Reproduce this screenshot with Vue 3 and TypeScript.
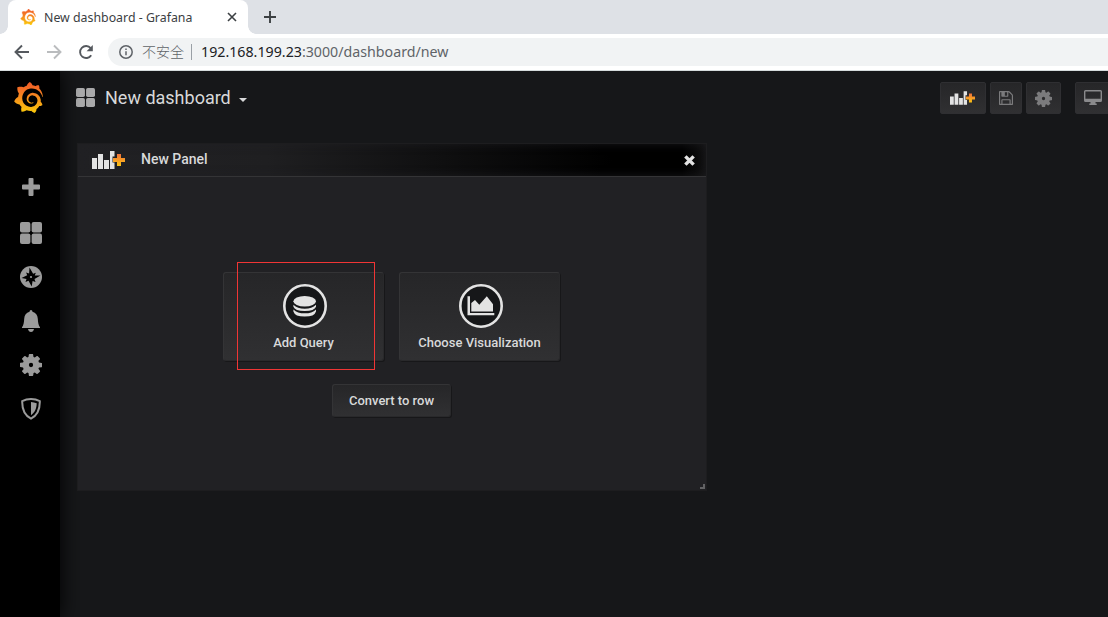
<script setup lang="ts">
interface PanelAction {
  label: string
  icon: 'database' | 'chart'
}

const actions: PanelAction[] = [
  { label: 'Add Query', icon: 'database' },
  { label: 'Choose Visualization', icon: 'chart' },
]

const grafanaPath =
  'M23.02 10.59a8.578 8.578 0 0 0-.862-3.034 8.911 8.911 0 0 0-1.789-2.445c.337-1.342-.413-2.505-.413-2.505-1.292-.08-2.113.4-2.416.62-.052-.02-.102-.044-.154-.064-.22-.089-.446-.172-.677-.247-.231-.073-.47-.14-.711-.197a9.867 9.867 0 0 0-.875-.161C14.557.753 12.94 0 12.94 0c-1.804 1.145-2.147 2.744-2.147 2.744l-.018.093c-.098.029-.2.057-.298.088-.138.042-.275.094-.413.143-.138.055-.275.107-.41.166a8.869 8.869 0 0 0-1.557.87l-.063-.029c-2.497-.955-4.716.195-4.716.195-.203 2.658.996 4.33 1.235 4.636a11.608 11.608 0 0 0-.607 2.635C1.636 12.677.953 15.014.953 15.014c1.926 2.214 4.171 2.351 4.171 2.351.003-.002.006-.002.006-.005.285.509.615.994.986 1.446.156.19.32.371.488.548-.704 2.009.099 3.68.099 3.68 2.144.08 3.553-.937 3.849-1.173a9.784 9.784 0 0 0 3.164.501h.08l.055-.003.107-.002.103-.005.003.002c1.01 1.44 2.788 1.646 2.788 1.646 1.264-1.332 1.337-2.653 1.337-2.94v-.058c0-.02-.003-.039-.003-.06.265-.187.52-.387.758-.6a7.875 7.875 0 0 0 1.415-1.7c1.43.083 2.437-.885 2.437-.885-.236-1.49-1.085-2.216-1.264-2.354l-.018-.013-.016-.013a.217.217 0 0 1-.031-.02c.008-.092.016-.18.02-.27.011-.162.016-.323.016-.48v-.253l-.005-.098-.008-.135a1.891 1.891 0 0 0-.01-.13c-.003-.042-.008-.083-.013-.125l-.016-.124-.018-.122a6.215 6.215 0 0 0-2.032-3.73 6.015 6.015 0 0 0-3.222-1.46 6.292 6.292 0 0 0-.85-.048l-.107.002h-.063l-.044.003-.104.008a4.777 4.777 0 0 0-3.335 1.695c-.332.4-.592.84-.768 1.297a4.594 4.594 0 0 0-.312 1.817l.003.091c.005.055.007.11.013.164a3.615 3.615 0 0 0 .698 1.82 3.53 3.53 0 0 0 1.827 1.282c.33.098.66.14.971.137.039 0 .078 0 .114-.002l.063-.003c.02 0 .041-.003.062-.003.034-.002.065-.007.099-.01.007 0 .018-.003.028-.003l.031-.005.06-.008a1.18 1.18 0 0 0 .112-.02c.036-.008.072-.013.109-.024a2.634 2.634 0 0 0 .914-.415c.028-.02.056-.041.085-.065a.248.248 0 0 0 .039-.35.244.244 0 0 0-.309-.06l-.078.042c-.09.044-.184.083-.283.116a2.476 2.476 0 0 1-.475.096c-.028.003-.054.006-.083.006l-.083.002c-.026 0-.054 0-.08-.002l-.102-.006h-.012l-.024.006c-.016-.003-.031-.003-.044-.006-.031-.002-.06-.007-.091-.01a2.59 2.59 0 0 1-.724-.213 2.557 2.557 0 0 1-.667-.438 2.52 2.52 0 0 1-.805-1.475 2.306 2.306 0 0 1-.029-.444l.006-.122v-.023l.002-.031c.003-.021.003-.04.005-.06a3.163 3.163 0 0 1 1.352-2.29 3.12 3.12 0 0 1 .937-.43 2.946 2.946 0 0 1 .776-.101h.06l.07.002.045.003h.026l.07.005a4.041 4.041 0 0 1 1.635.49 3.94 3.94 0 0 1 1.602 1.662 3.77 3.77 0 0 1 .397 1.414l.005.076.003.075c.002.026.002.05.002.075 0 .024.003.052 0 .07v.065l-.002.073-.008.174a6.195 6.195 0 0 1-.08.639 5.1 5.1 0 0 1-.267.927 5.31 5.31 0 0 1-.624 1.13 5.052 5.052 0 0 1-3.237 2.014 4.82 4.82 0 0 1-.649.066l-.039.003h-.287a6.607 6.607 0 0 1-1.716-.265 6.776 6.776 0 0 1-3.4-2.274 6.75 6.75 0 0 1-.746-1.15 6.616 6.616 0 0 1-.714-2.596l-.005-.083-.002-.02v-.056l-.003-.073v-.096l-.003-.104v-.07l.003-.163c.008-.22.026-.45.054-.678a8.707 8.707 0 0 1 .28-1.355c.128-.444.286-.872.473-1.277a7.04 7.04 0 0 1 1.456-2.1 5.925 5.925 0 0 1 .953-.763c.169-.111.343-.213.524-.306.089-.05.182-.091.273-.135.047-.02.093-.042.138-.062a7.177 7.177 0 0 1 .714-.267l.145-.045c.049-.015.098-.026.148-.041.098-.029.197-.052.296-.076.049-.013.1-.02.15-.033l.15-.032.151-.028.076-.013.075-.01.153-.024c.057-.01.114-.013.171-.023l.169-.021c.036-.003.073-.008.106-.01l.073-.008.036-.003.042-.002c.057-.003.114-.008.171-.01l.086-.006h.023l.037-.003.145-.007a7.999 7.999 0 0 1 1.708.125 7.917 7.917 0 0 1 2.048.68 8.253 8.253 0 0 1 1.672 1.09l.09.077.089.078c.06.052.114.107.171.159.057.052.112.106.166.16.052.055.107.107.159.164a8.671 8.671 0 0 1 1.41 1.978c.012.026.028.052.04.078l.04.078.075.156c.023.051.05.1.07.153l.065.15a8.848 8.848 0 0 1 .45 1.34.19.19 0 0 0 .201.142.186.186 0 0 0 .172-.184c.01-.246.002-.532-.024-.856z'

const cogBody =
  'M1536 787v222q0 12-8 23t-20 13l-185 28q-19 54-39 91 35 50 107 138 10 12 10 25t-9 23q-27 37-99 108t-94 71q-12 0-26-9l-138-108q-44 23-91 38-16 136-29 186-7 28-36 28h-222q-14 0-24.5-8.5t-11.5-21.5l-28-184q-49-16-90-37l-141 107q-10 9-25 9-14 0-25-11-126-114-165-168-7-10-7-23 0-12 8-23 15-21 51-66.5t54-70.5q-27-50-41-99l-183-27q-13-2-21-12.5t-8-23.5v-222q0-12 8-23t19-13l186-28q14-46 39-92-40-57-107-138-10-12-10-24 0-10 9-23 26-36 98.5-107.5t94.500-71.5q13 0 26 10l138 107q44-23 91-38 16-136 29-186 7-28 36-28h222q14 0 24.5 8.500t11.5 21.500l28 184q49 16 90 37l142-107q9-9 24-9 13 0 25 10 129 119 165 170 7 8 7 22 0 12-8 23-15 21-51 66.500t-54 70.500q26 50 41 98l183 28q13 2 21 12.500t8 23.500z'
const cogHole = (r: number): string =>
  `M${768 - r} 896a${r} ${r} 0 1 0 ${2 * r} 0a${r} ${r} 0 1 0 ${-2 * r} 0z`
const cogPath = cogBody + cogHole(150)

const floppyPath =
  'M384 1536h768v-384h-768v384zm896 0h128v-896q0-14-10-38.500t-20-34.500l-281-281q-10-10-34-20t-39-10v416q0 40-28 68t-68 28h-576q-40 0-68-28t-28-68v-416h-128v1280h128v-416q0-40 28-68t68-28h832q40 0 68 28t28 68v416zm-384-928v-320q0-13-9.500-22.500t-22.500-9.500h-192q-13 0-22.500 9.500t-9.500 22.500v320q0 13 9.500 22.500t22.500 9.500h192q13 0 22.500-9.500t9.500-22.500zm640 32v928q0 40-28 68t-68 28h-1344q-40 0-68-28t-28-68v-1344q0-40 28-68t68-28h928q40 0 88 20t76 48l280 280q28 28 48 76t20 88z'
</script>

<template>
  <div class="window">
    <svg class="defs" width="0" height="0">
      <defs>
        <linearGradient id="flame" x1="0" y1="0" x2="0" y2="1">
          <stop offset="0" stop-color="#f05a28" />
          <stop offset="0.35" stop-color="#f47b23" />
          <stop offset="1" stop-color="#fbca0a" />
        </linearGradient>
        <linearGradient id="plusFill" x1="0" y1="0" x2="0" y2="1">
          <stop offset="0" stop-color="#f2713a" />
          <stop offset="1" stop-color="#fbc412" />
        </linearGradient>
        <symbol id="addPanel" viewBox="0 0 33 18">
          <path d="M0 7h5v11H0zM6 3h5v15H6zM12 9h5v9h-5zM18 0h4.500v5.500h-2v6h2V18H18z" fill="#e3e3e3" />
          <path d="M25 3h4v4h4v4h-4v4h-4v-4h-4V7h4z" fill="url(#plusFill)" />
        </symbol>
      </defs>
    </svg>

    <div class="tabs">
      <div class="tab">
        <svg class="favicon" viewBox="0 0 24 24"><path :d="grafanaPath" fill="url(#flame)" stroke="url(#flame)" stroke-width=".5" /></svg>
        <span class="tab-title">New dashboard - Grafana</span>
        <svg class="tab-close" viewBox="0 0 10 10"><path d="M1 1l8 8M9 1l-8 8" /></svg>
      </div>
      <svg class="new-tab" viewBox="0 0 12 12"><path d="M6 0v12M0 6h12" /></svg>
    </div>

    <div class="toolbar">
      <svg class="nav" viewBox="0 0 16 16"><path d="M15 8H2M8 1.500L1.500 8 8 14.500" /></svg>
      <svg class="nav off" viewBox="0 0 16 16"><path d="M1 8h13M8 1.500L14.500 8 8 14.500" /></svg>
      <svg class="nav" viewBox="0 0 16 16">
        <path d="M13.200 11.200A6 6 0 1 1 12.700 4.200" />
        <path class="solid" d="M14.800 1v6.200H8.600z" />
      </svg>
      <div class="omnibox">
        <svg class="info" viewBox="0 0 14 14">
          <circle cx="7" cy="7" r="6.200" />
          <path d="M7 6.200v4M7 3.400v1.600" />
        </svg>
        <span class="insecure">不安全</span>
        <span class="divider"></span>
        <span class="url"><b>192.168.199.23</b>:3000/dashboard/new</span>
      </div>
    </div>

    <div class="app">
      <nav class="sidebar">
        <svg class="logo" viewBox="0 0 24 24"><path :d="grafanaPath" fill="url(#flame)" /></svg>
        <ul class="menu">
          <li>
            <svg width="18" height="18" viewBox="0 0 18 18"><path d="M7.500 0h3q1 0 1 1v5.500H17q1 0 1 1v3q0 1-1 1h-5.500V17q0 1-1 1h-3q-1 0-1-1v-5.500H1q-1 0-1-1v-3q0-1 1-1h5.500V1q0-1 1-1z" /></svg>
          </li>
          <li class="boards">
            <svg width="22" height="22" viewBox="0 0 22 22">
              <rect width="10.400" height="10.400" rx="2" /><rect x="11.600" width="10.400" height="10.400" rx="2" />
              <rect y="11.600" width="10.400" height="10.400" rx="2" /><rect x="11.600" y="11.600" width="10.400" height="10.400" rx="2" />
            </svg>
          </li>
          <li>
            <svg width="22" height="22" viewBox="0 0 22 22">
              <circle cx="11" cy="11" r="11" />
              <path class="cut" d="M9.500 1.500l3.600 6.200 2.700-1-1 2.700 5.700.2-6 3.500 1 2.900-2.900-1-.9 5.500-3.200-5.800-3 1.200 1-3-5-1 5.700-2.700L6.100 6.400l3 1z" />
              <circle cx="11" cy="11" r="1.100" />
            </svg>
          </li>
          <li>
            <svg width="20" height="22" viewBox="0 0 20 22"><path d="M10 0q1.400 0 1.500 1.700c3.300.8 5.100 3.300 5.300 7.100.2 4.200.7 6.500 2.200 8.400v.8H1v-.8c1.500-1.900 2-4.200 2.200-8.400.2-3.800 2-6.300 5.300-7.100Q8.600 0 10 0zM7 19h6q-.6 2.900-3 2.900T7 19z" /></svg>
          </li>
          <li>
            <svg width="22" height="22" viewBox="0 128 1536 1536"><path :d="cogPath" fill-rule="evenodd" /></svg>
          </li>
          <li>
            <svg width="20" height="22" viewBox="0 0 20 22">
              <path class="line" d="M10 1.100c3 0 6 .6 8.800 2 .2 7.800-2.500 14.300-8.800 17.500C3.700 17.400 1 10.900 1.200 3.100 4 1.700 7 1.100 10 1.100z" />
              <path d="M10 4c2 .1 3.800.5 5.700 1.300-.1 4.900-1.700 9.200-5.700 11.900z" />
            </svg>
          </li>
        </ul>
      </nav>

      <main class="main">
        <header class="navbar">
          <svg class="boards-icon" viewBox="0 0 20 20">
            <rect width="9.400" height="9.400" rx="1.800" /><rect x="10.600" width="9.400" height="9.400" rx="1.800" />
            <rect y="10.600" width="9.400" height="9.400" rx="1.800" /><rect x="10.600" y="10.600" width="9.400" height="9.400" rx="1.800" />
          </svg>
          <h1>New dashboard</h1>
          <span class="caret"></span>
          <div class="tools">
            <button class="tool add"><svg width="25" height="14"><use href="#addPanel" /></svg></button>
            <button class="tool save"><svg width="14" height="14" viewBox="0 128 1536 1536"><path :d="floppyPath" /></svg></button>
            <button class="tool cog"><svg width="17" height="17" viewBox="0 128 1536 1536"><path :d="cogPath" fill-rule="evenodd" /></svg></button>
            <button class="tool tv">
              <svg width="18" height="15" viewBox="0 0 18 15"><path fill-rule="evenodd" d="M1.500 0h15Q18 0 18 1.500v9q0 1.500-1.500 1.500h-5v1.500h1.200V15H5.300v-1.500h1.200V12h-5Q0 12 0 10.500v-9Q0 0 1.500 0zM1.400 1.400v7.400h15.200V1.400z" /></svg>
            </button>
          </div>
        </header>

        <section class="panel">
          <div class="panel-head">
            <svg class="panel-icon" width="33" height="18"><use href="#addPanel" /></svg>
            <span class="panel-title">New Panel</span>
            <svg class="panel-close" viewBox="0 0 12 12"><path d="M2.200 2.200l7.600 7.600M9.800 2.200L2.200 9.800" /></svg>
          </div>
          <div class="panel-body">
            <div class="cards">
              <button v-for="action in actions" :key="action.label" class="card">
                <svg class="badge" viewBox="0 0 44 44">
                  <circle class="ring" cx="22" cy="22" r="20.700" />
                  <g v-if="action.icon === 'database'">
                    <ellipse cx="21.700" cy="17.300" rx="11.300" ry="5.200" />
                    <path d="M10.400 20.800q4 3.900 11.300 3.900T33 20.800v2q-1.500 4.200-11.300 4.200t-11.300-4.200z" />
                    <path d="M10.400 25.400q4 3.900 11.300 3.900T33 25.400v2q-1.500 5.200-11.300 5.200t-11.300-5.200z" />
                  </g>
                  <g v-else>
                    <path d="M8.500 12.300H11v16.600h24.300v2.300H8.500z" />
                    <path d="M12.300 27.500v-8.500l3.700-3 4.300 4.800 7.500-8.500 6.200 8v7.200z" />
                  </g>
                </svg>
                <span>{{ action.label }}</span>
              </button>
              <div class="highlight"></div>
            </div>
            <button class="convert">Convert to row</button>
          </div>
          <span class="grip"></span>
        </section>
      </main>
    </div>
  </div>
</template>

<style>
body {
  margin: 0;
  background: #161719;
}
</style>

<style scoped>
.window {
  width: 1108px;
  height: 617px;
  overflow: hidden;
  display: flex;
  flex-direction: column;
  font-family: Roboto, "Liberation Sans", sans-serif;
}
.defs {
  position: absolute;
}
svg {
  display: block;
  flex: none;
}
button {
  font: inherit;
  margin: 0;
  padding: 0;
  box-sizing: border-box;
}
.tabs {
  height: 34px;
  flex: none;
  box-sizing: border-box;
  padding-left: 8px;
  background: #dee1e6;
  display: flex;
  align-items: center;
}
.tab {
  width: 240px;
  height: 34px;
  box-sizing: border-box;
  padding: 0 11px 0 12px;
  border-radius: 8px 8px 0 0;
  background: #fff;
  display: flex;
  align-items: center;
  position: relative;
}
.tab::before,
.tab::after {
  content: "";
  position: absolute;
  bottom: 0;
  width: 8px;
  height: 8px;
}
.tab::before {
  left: -8px;
  background: radial-gradient(circle at 0 0, transparent 7.500px, #fff 8px);
}
.tab::after {
  right: -8px;
  background: radial-gradient(circle at 100% 0, transparent 7.500px, #fff 8px);
}
.favicon {
  width: 16px;
  height: 16px;
}
.tab-title {
  margin-left: 8px;
  padding-top: 2px;
  flex: 1;
  white-space: nowrap;
  font: 12.350px/20px "Noto Sans", sans-serif;
  color: #3c4043;
}
.tab-close {
  width: 10px;
  height: 10px;
  fill: none;
  stroke: #3c4043;
  stroke-width: 1.600;
}
.new-tab {
  margin-left: 16px;
  width: 12px;
  height: 12px;
  fill: none;
  stroke: #3c4043;
  stroke-width: 1.900;
}
.toolbar {
  height: 36px;
  flex: none;
  box-sizing: border-box;
  padding-left: 14px;
  background: #fff;
  border-bottom: 1px solid #fff;
  display: flex;
  align-items: center;
}
.nav {
  width: 16px;
  height: 16px;
  margin-right: 16px;
  fill: none;
  stroke: #55595e;
  stroke-width: 1.900;
}
.nav .solid {
  fill: #55595e;
  stroke: none;
}
.nav.off {
  stroke: #babcbe;
}
.nav + .omnibox {
  margin-left: -2px;
}
.omnibox {
  flex: 1;
  height: 28px;
  padding-left: 11px;
  border-radius: 14px 0 0 14px;
  background: #f1f3f4;
  display: flex;
  align-items: center;
}
.info {
  width: 14px;
  height: 14px;
  fill: none;
  stroke: #5f6368;
  stroke-width: 1.500;
}
.insecure {
  margin-left: 9px;
  padding-bottom: 2px;
  font: 14px/20px "Noto Sans CJK SC", sans-serif;
  font-weight: 300;
  color: #5f6368;
}
.divider {
  width: 1px;
  height: 16px;
  margin: 0 9px 0 7px;
  background: #9aa0a6;
}
.url {
  font: 14.220px/20px "Noto Sans", sans-serif;
  color: #5f6368;
  white-space: nowrap;
}
.url b {
  font-weight: 400;
  color: #202124;
}
.app {
  flex: 1;
  border-top: 1px solid #d5dbdc;
  display: flex;
  background: #161719;
}
.sidebar {
  width: 60px;
  flex: none;
  background: #000;
  box-shadow: 0 0 20px #000;
  clip-path: inset(0 -20px 0 0);
}
.logo {
  width: 31px;
  height: 31px;
  margin: 11px 0 0 12.500px;
}
.menu {
  list-style: none;
  margin: 52px 0 0;
  padding: 0 0 0 2px;
}
.menu li {
  height: 44px;
  display: flex;
  align-items: center;
  justify-content: center;
}
.menu li.boards {
  height: 46px;
  padding-top: 2px;
  box-sizing: border-box;
}
.menu svg {
  fill: #9b9b9b;
}
.menu .cut {
  fill: #000;
}
.menu .line {
  fill: none;
  stroke: #9b9b9b;
  stroke-width: 2;
}
.main {
  flex: 1;
  min-width: 0;
}
.navbar {
  height: 54px;
  padding-left: 16px;
  display: flex;
  align-items: center;
}
.boards-icon {
  width: 19px;
  height: 19px;
  margin-bottom: 1px;
  fill: #a9a9aa;
}
h1 {
  margin: 0 0 0 10px;
  font-size: 18px;
  line-height: 24px;
  font-weight: 400;
  color: #d8d9da;
  white-space: nowrap;
}
.caret {
  margin: 4px 0 0 8px;
  border: 4px solid transparent;
  border-top-color: #d8d9da;
  border-bottom: 0;
}
.tools {
  margin-left: auto;
  display: flex;
}
.tool {
  height: 32px;
  border: 1px solid #2f2f32;
  border-radius: 2px;
  background: linear-gradient(#262628, #303032);
  display: flex;
  align-items: center;
  justify-content: center;
  fill: #7b7b7d;
}
.add {
  width: 46px;
  padding-right: 1px;
}
.save {
  width: 32px;
  margin-left: 4px;
}
.cog {
  width: 35px;
  margin-left: 4px;
}
.tv {
  width: 36px;
  padding-bottom: 1px;
  margin: 0 -3px 0 14px;
  fill: #8a8a8c;
}
.panel {
  width: 630px;
  height: 348px;
  margin: 18px 0 0 17px;
  box-sizing: border-box;
  background: #212124;
  border: 1px solid #1d1d1f;
  position: relative;
}
.panel-head {
  height: 33px;
  box-sizing: border-box;
  padding: 0 10px 0 14px;
  border-bottom: 1px solid #343436;
  background: linear-gradient(90deg, #212124 0%, #1f1f21 30%, #000 85%, #000 96%, #101011 100%);
  box-shadow: inset 0 0 10px rgba(33, 33, 36, 0.7);
  display: flex;
  align-items: center;
}
.panel-title {
  margin-left: 16px;
  padding-bottom: 2px;
  flex: 1;
  font-size: 14px;
  font-weight: 500;
  color: #d8d9da;
}
.panel-close {
  width: 13px;
  height: 13px;
  fill: none;
  stroke: #e3e3e3;
  stroke-width: 3.200;
}
.panel-body {
  padding-top: 95px;
  display: flex;
  flex-direction: column;
  align-items: center;
}
.cards {
  display: flex;
  gap: 15px;
  margin-right: 1px;
  position: relative;
}
.card,
.convert {
  border: 1px solid #343436;
  border-right-color: #29292b;
  border-bottom-color: #29292b;
  border-radius: 3px;
  background: linear-gradient(#262628, #303032);
  box-shadow: 1px 1px 0 #171719;
  color: #d8d9da;
  font-size: 13px;
  font-weight: 500;
  white-space: nowrap;
}
.card {
  width: 161px;
  height: 89px;
  padding-top: 11px;
  display: flex;
  flex-direction: column;
  align-items: center;
}
.card span {
  margin-top: 6px;
  line-height: 18px;
}
.badge {
  width: 44px;
  height: 44px;
  margin-left: 2px;
  fill: #e3e3e3;
}
.badge .ring {
  fill: #161719;
  stroke: #e3e3e3;
  stroke-width: 2.600;
}
.highlight {
  position: absolute;
  left: 14px;
  top: -10px;
  width: 138px;
  height: 108px;
  box-sizing: border-box;
  border: 1px solid #f03535;
}
.convert {
  width: 119px;
  height: 33px;
  margin: 23px 1px 0 0;
}
.grip {
  position: absolute;
  right: 1px;
  bottom: 1px;
  width: 3px;
  height: 3px;
  border: solid #626264;
  border-width: 0 2px 2px 0;
}
</style>
